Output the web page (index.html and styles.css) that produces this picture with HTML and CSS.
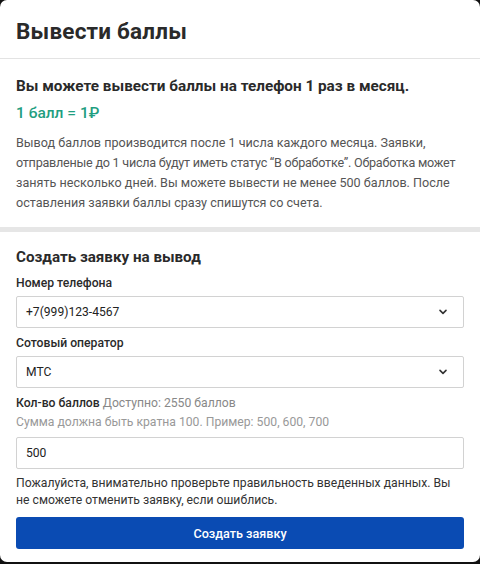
FILE: index.html
```html
<!DOCTYPE html>
<html lang="ru">
<head>
<meta charset="utf-8">
<link rel="stylesheet" href="styles.css">
</head>
<body>
<div class="modal">
  <div class="modal-head">
    <h1 class="title">Вывести баллы</h1>
  </div>
  <div class="info">
    <h2 class="info-title">Вы можете вывести баллы на телефон 1 раз в месяц.</h2>
    <div class="rate">1 балл = 1₽</div>
    <p class="info-text">Вывод баллов производится после 1 числа каждого месяца. Заявки,<br><span class="tight">отправленые до 1 числа будут иметь статус “В обработке”. Обработка может</span><br>занять несколько дней. Вы можете вывести не менее 500 баллов. После<br>оставления заявки баллы сразу спишутся со счета.</p>
  </div>
  <div class="sep"></div>
  <form class="form">
    <h2 class="form-title">Создать заявку на вывод</h2>
    <div class="field">
      <div class="label">Номер телефона</div>
      <div class="select">
        <span>+7(999)123-4567</span>
        <svg class="chev" width="10" height="6" viewBox="0 0 10 6"><path d="M2 1.4 5 4.4 8 1.4" fill="none" stroke="#333" stroke-width="1.6" stroke-linecap="round" stroke-linejoin="round"/></svg>
      </div>
    </div>
    <div class="field">
      <div class="label">Сотовый оператор</div>
      <div class="select">
        <span>МТС</span>
        <svg class="chev" width="10" height="6" viewBox="0 0 10 6"><path d="M2 1.4 5 4.4 8 1.4" fill="none" stroke="#333" stroke-width="1.6" stroke-linecap="round" stroke-linejoin="round"/></svg>
      </div>
    </div>
    <div class="field">
      <div class="label label-compact">Кол-во баллов <span class="muted">Доступно: 2550 баллов</span></div>
      <div class="hint">Сумма должна быть кратна 100. Пример: 500, 600, 700</div>
      <div class="input">500</div>
    </div>
    <p class="warn">Пожалуйста, внимательно проверьте правильность введенных данных. Вы<br>не сможете отменить заявку, если ошиблись.</p>
    <div class="btn">Создать заявку</div>
  </form>
</div>
</body>
</html>
```
FILE: styles.css
```css
* { box-sizing: border-box; }
html, body { margin: 0; padding: 0; }
body {
  background: #111;
  font-family: Roboto, "Noto Sans", sans-serif;
  color: #222;
  width: 480px;
  height: 564px;
  overflow: hidden;
}
.modal {
  background: #fff;
  border-radius: 7px;
  height: 562px;
  overflow: hidden;
}
.modal-head {
  height: 59px;
  border-bottom: 1px solid #e3e3e3;
  padding: 17px 16px 0;
}
.title {
  margin: 0;
  font-size: 22.5px;
  line-height: 28px;
  font-weight: 700;
  color: #2a2a2a;
  letter-spacing: 0.2px;
}
.info {
  padding: 17px 16px 0;
  height: 168px;
}
.info-title {
  margin: 0;
  font-size: 15.3px;
  line-height: 20px;
  font-weight: 700;
  color: #2a2a2a;
}
.rate {
  margin-top: 7px;
  font-size: 15.5px;
  line-height: 20px;
  font-weight: 500;
  color: #1f9e80;
}
.info-text {
  margin: 10px 0 0;
  font-size: 12.6px;
  line-height: 20px;
  color: #555;
  white-space: nowrap;
}
.tight { letter-spacing: -0.24px; }
.sep {
  height: 5px;
  background: #e6e6e6;
}
.form {
  padding: 15px 16px 0;
  display: flex;
  flex-direction: column;
}
.form-title {
  margin: 0;
  font-size: 15.2px;
  line-height: 20px;
  font-weight: 700;
  color: #2a2a2a;
}
.field { display: flex; flex-direction: column; }
.label {
  font-size: 12.2px;
  line-height: 16px;
  font-weight: 500;
  color: #2a2a2a;
  margin-top: 8px;
  margin-bottom: 5px;
}
.field + .field .label { margin-top: 7px; }
.field + .field .label-compact { margin-bottom: 0; }
.muted { color: #888; font-weight: 400; }
.hint {
  font-size: 12.2px;
  line-height: 16px;
  color: #999;
  margin-top: 3px;
  margin-bottom: 7px;
}
.select, .input {
  height: 32px;
  border: 1px solid #d2d2d2;
  border-radius: 2px;
  display: flex;
  align-items: center;
  justify-content: space-between;
  padding: 0 15px 0 9px;
  font-size: 12.1px;
  color: #222;
}
.chev { display: block; }
.warn {
  margin: 6px 0 0;
  font-size: 12.2px;
  line-height: 17px;
  color: #333;
  white-space: nowrap;
}
.btn {
  margin-top: 8px;
  height: 32px;
  background: #0a4bb3;
  border-radius: 3px;
  color: #fff;
  font-size: 12.6px;
  font-weight: 500;
  display: flex;
  align-items: center;
  justify-content: center;
}
```
